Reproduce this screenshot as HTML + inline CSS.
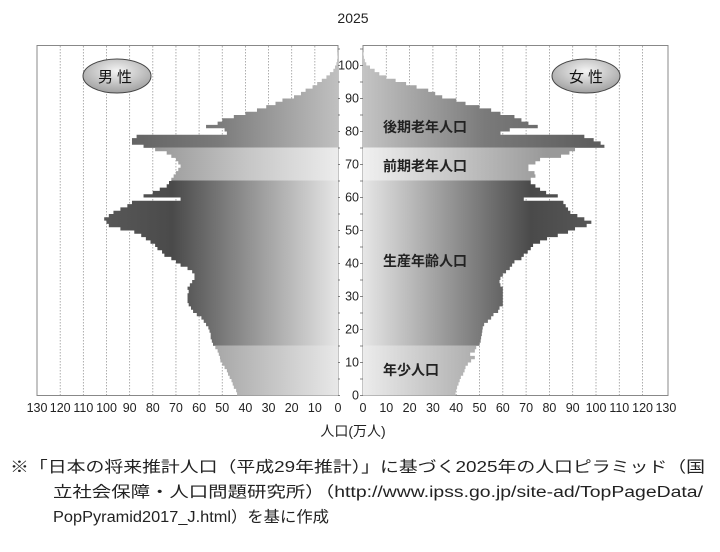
<!DOCTYPE html>
<html><head><meta charset="utf-8">
<style>
html,body{margin:0;padding:0;background:#fff;}
body{width:720px;height:552px;overflow:hidden;}
svg{display:block;}
</style></head>
<body>
<svg id="s" width="720" height="552" viewBox="0 0 720 552" xmlns="http://www.w3.org/2000/svg" font-family="'Liberation Sans','Noto Sans CJK JP',sans-serif">
<defs>
<linearGradient id="mP" gradientUnits="userSpaceOnUse" x1="37" y1="0" x2="338" y2="0">
 <stop offset="0" stop-color="#666"/><stop offset="0.45" stop-color="#4a4a4a"/><stop offset="1" stop-color="#e6e6e6"/></linearGradient>
<linearGradient id="mY" gradientUnits="userSpaceOnUse" x1="37" y1="0" x2="338" y2="0">
 <stop offset="0.6" stop-color="#a8a8a8"/><stop offset="1" stop-color="#e8e8e8"/></linearGradient>
<linearGradient id="mE" gradientUnits="userSpaceOnUse" x1="37" y1="0" x2="338" y2="0">
 <stop offset="0.4" stop-color="#999"/><stop offset="0.7" stop-color="#c6c6c6"/><stop offset="1" stop-color="#ececec"/></linearGradient>
<linearGradient id="mO" gradientUnits="userSpaceOnUse" x1="37" y1="0" x2="338" y2="0">
 <stop offset="0.25" stop-color="#5e5e5e"/><stop offset="0.6" stop-color="#7a7a7a"/><stop offset="1" stop-color="#c0c0c0"/></linearGradient>
<linearGradient id="fP" gradientUnits="userSpaceOnUse" x1="668" y1="0" x2="363" y2="0">
 <stop offset="0" stop-color="#666"/><stop offset="0.45" stop-color="#4a4a4a"/><stop offset="1" stop-color="#e6e6e6"/></linearGradient>
<linearGradient id="fY" gradientUnits="userSpaceOnUse" x1="668" y1="0" x2="363" y2="0">
 <stop offset="0.6" stop-color="#a8a8a8"/><stop offset="1" stop-color="#ececec"/></linearGradient>
<linearGradient id="fE" gradientUnits="userSpaceOnUse" x1="668" y1="0" x2="363" y2="0">
 <stop offset="0.4" stop-color="#999"/><stop offset="0.7" stop-color="#c6c6c6"/><stop offset="1" stop-color="#f0f0f0"/></linearGradient>
<linearGradient id="fO" gradientUnits="userSpaceOnUse" x1="668" y1="0" x2="363" y2="0">
 <stop offset="0.25" stop-color="#5e5e5e"/><stop offset="0.6" stop-color="#7a7a7a"/><stop offset="1" stop-color="#c4c4c4"/></linearGradient>
<radialGradient id="ell" cx="0.5" cy="0.35" r="0.7">
 <stop offset="0" stop-color="#f4f4f4"/><stop offset="1" stop-color="#9a9a9a"/></radialGradient>
<clipPath id="cm"><path id="pm" d=""/></clipPath>
<clipPath id="cf"><path id="pf" d=""/></clipPath>
</defs>
<text x="353" y="23" font-size="14" text-anchor="middle" fill="#222">2025</text>
<rect x="37" y="45.5" width="301" height="350" fill="#fff" stroke="#888" stroke-width="1"/>
<rect x="363" y="45.5" width="305" height="350" fill="#fff" stroke="#888" stroke-width="1"/>
<g id="grid" stroke="#999" stroke-width="0.8" stroke-dasharray="1.5,1.5"></g>
<g clip-path="url(#cm)">
 <rect x="37" y="44" width="301" height="104" fill="url(#mO)"/>
 <rect x="37" y="147.5" width="301" height="33" fill="url(#mE)"/>
 <rect x="37" y="180.5" width="301" height="165" fill="url(#mP)"/>
 <rect x="37" y="345.5" width="301" height="50" fill="url(#mY)"/>
</g>
<g clip-path="url(#cf)">
 <rect x="363" y="44" width="305" height="104" fill="url(#fO)"/>
 <rect x="363" y="147.5" width="305" height="33" fill="url(#fE)"/>
 <rect x="363" y="180.5" width="305" height="165" fill="url(#fP)"/>
 <rect x="363" y="345.5" width="305" height="50" fill="url(#fY)"/>
</g>
<g id="axis" fill="#222" font-size="12.5"></g>
<g font-size="14" font-weight="bold" fill="#222">
 <text x="383" y="132">後期老年人口</text>
 <text x="383" y="171">前期老年人口</text>
 <text x="383" y="266">生産年齢人口</text>
 <text x="383" y="375">年少人口</text>
</g>
<ellipse cx="117" cy="76" rx="34" ry="17" fill="url(#ell)" stroke="#444" stroke-width="1"/>
<text x="117" y="82" font-size="15" text-anchor="middle" fill="#111" letter-spacing="4">男性</text>
<ellipse cx="586" cy="76" rx="34" ry="17" fill="url(#ell)" stroke="#444" stroke-width="1"/>
<text x="588" y="82" font-size="15" text-anchor="middle" fill="#111" letter-spacing="4">女性</text>
<text x="353" y="436" font-size="14" text-anchor="middle" fill="#222">人口(万人)</text>
<g font-size="15.5" fill="#222">
 <text x="10" y="472" textLength="695" lengthAdjust="spacingAndGlyphs">※「日本の将来推計人口（平成29年推計）」に基づく2025年の人口ピラミッド（国</text>
 <text x="53" y="497" textLength="650" lengthAdjust="spacingAndGlyphs">立社会保障・人口問題研究所）（http://www.ipss.go.jp/site-ad/TopPageData/</text>
 <text x="53" y="522" textLength="276" lengthAdjust="spacingAndGlyphs">PopPyramid2017_J.html）を基に作成</text>
</g>
</svg>
<script>
var M=[43.6,44,45,45.5,46,46.8,47.5,48,49,50,50.8,51,51.5,52,53,54,54.5,55,55,55.5,56,57,58,59,61,62.6,63.5,64.5,65,65,65,64.5,65,64,63,62,62,63,65,68,70,72,75,76,78,79,81,83,85,88,94,99,100,101,99,97,94,91,89,68,84,80,77,74,73,72,71,70,69,68,69,70,72,74,79,84,89,89,87,48,49,57,52,50,45,40,35,31,27,24,19,16,14,11,9,7,5,3.5,2,1.3,0.7,0.4,0.2,0.1];
var F=[39.7,40,40.4,41,41.5,42,43,43.6,44,45,46.4,48,46,48,48.6,50,50.5,50.7,51,51.2,51.4,52,53.6,55,56,58,58.6,60,60,60,60,60,60,59,58.6,59,60,61.4,63,64,65,68,69,70.7,72,73,76,79,83.6,88,91,96,98,95,92,89,88,87,86,69,83.6,78.6,76,74,72,72,74,73.6,71,71,74,76,85,88.6,91,103.6,102,99,95,59,63,75,71,68,65,59,55,50,44,40,34,31,28,23,18.5,14,10,7,5,3,1.4,0.8,0.4,0.2];
function Y(a){return 395.5-3.3*a;}
function build(arr,cx,s){
 var d="M"+cx+","+Y(0);
 for(var a=0;a<arr.length;a++){var x=(cx+s*arr[a]).toFixed(2);d+=" L"+x+","+Y(a).toFixed(2)+" L"+x+","+Y(a+1).toFixed(2);}
 d+=" L"+cx+","+Y(arr.length).toFixed(2)+" Z";return d;}
document.getElementById("pm").setAttribute("d",build(M,338,-2.315));
document.getElementById("pf").setAttribute("d",build(F,363,2.33));
var ns="http://www.w3.org/2000/svg",g=document.getElementById("grid"),ax=document.getElementById("axis");
function el(p,t,at,txt){var e=document.createElementNS(ns,t);for(var k in at)e.setAttribute(k,at[k]);if(txt!=null)e.textContent=txt;p.appendChild(e);return e;}
for(var k=1;k<13;k++){var x1=338-23.15*k,x2=363+23.3*k;
 el(g,"line",{x1:x1,y1:46,x2:x1,y2:395});el(g,"line",{x1:x2,y1:46,x2:x2,y2:395});}
for(var k=0;k<=13;k++){
 el(ax,"text",{x:338-23.15*k,y:412,"text-anchor":"middle"},String(k*10));
 el(ax,"text",{x:363+23.3*k,y:412,"text-anchor":"middle"},String(k*10));}
for(var a=0;a<=105;a+=5){var y=Y(a);
 el(ax,"line",{x1:360,y1:y,x2:363,y2:y,stroke:"#666","stroke-width":"0.8"});
 el(ax,"line",{x1:338,y1:y,x2:340,y2:y,stroke:"#666","stroke-width":"0.8"});
 if(a%10==0&&a<=100)el(ax,"text",{x:359,y:y+4,"text-anchor":"end"},String(a));}
</script>
</body></html>
